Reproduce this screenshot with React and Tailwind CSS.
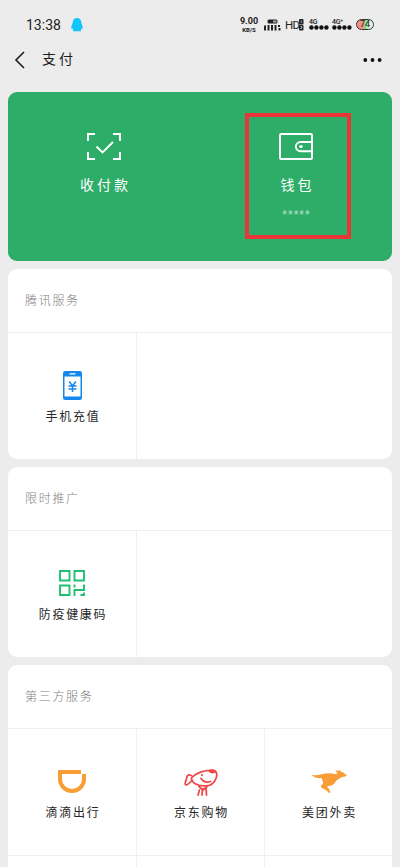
import React from "react";

function StatusBar() {
  return (
    <div className="flex h-[46px] shrink-0 items-start pl-[26px] pt-[15px]">
      <span className="w-[45px] font-['Roboto'] text-[14px] leading-[20px] text-[#222]">13:38</span>
      <svg className="mt-[3px] h-[14px] w-[12px]" viewBox="0 0 12 14" fill="#0fc5fb">
        <path d="M6 0C3.300 0 1.800 2 1.700 4.500 1.500 6.300 0 8 .2 10.200c.1.9.8.4 1.300 0C1.500 11 1.900 11.700 2.400 12.200 1.700 12.600 1.700 13.300 2.600 13.300H9.400c.9 0 .9-.7.200-1.100.5-.5.9-1.200.9-2 .5.400 1.200.9 1.300 0C12 8 10.500 6.300 10.300 4.500 10.200 2 8.700 0 6 0Z" />
      </svg>
      <div className="ml-[156px] mt-[2px] flex w-[20px] flex-col items-center font-['Roboto'] font-bold text-[#222]">
        <span className="whitespace-nowrap text-[9px] leading-[9px]">9.00</span>
        <span className="whitespace-nowrap text-[6px] leading-[7px]">KB/S</span>
      </div>
      <svg className="ml-[5px] mt-[4px] h-[12px] w-[17px]" viewBox="0 0 17 12">
        <rect x="3.500" y=".5" width="10" height="4" rx="1.500" fill="#222" />
        <path d="M9 1.500h3.500v2H9z" fill="#aaa" />
        <path d="M0 6.500h2v5H0zM3.500 6h2v5.500h-2zM7 6h2v5.500H7zM10.500 6h2v5.500h-2zM14 6h2v2h-2zM14.500 9h2v2.500h-2z" fill="#222" />
      </svg>
      <span className="ml-[4px] w-[14px] whitespace-nowrap font-['Roboto'] text-[11.500px] leading-[20px] tracking-[-0.8px] text-[#222]">HD</span>
      <svg className="mt-[4px] h-[12px] w-[5px]" viewBox="0 0 5 12">
        <rect width="4.500" height="5.500" rx="1" fill="#222" />
        <rect y="6" width="4.500" height="5.500" rx="1" fill="#222" />
        <path d="M2.300 1.500v2.500M1.500 7.500h1.500v1l-1.500 1h1.500" stroke="#ddd" strokeWidth=".7" fill="none" />
      </svg>
      <Signal label="4G" className="ml-[5px]" />
      <Signal label="4G⁺" className="ml-[3px]" />
      <div className="ml-[4px] mt-[4px] flex h-[11px] w-[18px] items-center justify-center rounded-full border border-[#333] bg-linear-to-r from-[#f38f84] from-45% via-[#74d77c] via-45% to-[#eee] to-85% font-['Roboto'] text-[9px] leading-[9px] text-[#222]">
        74
      </div>
    </div>
  );
}

function Signal({ label, className }) {
  return (
    <div className={"mt-[4px] w-[20px] " + className}>
      <div className="h-[6px] whitespace-nowrap font-['Roboto'] text-[7px] font-medium leading-[6px] tracking-[-0.3px] text-[#222]">{label}</div>
      <svg className="block h-[5px] w-[20px]" viewBox="0 0 20 5" fill="#111">
        <circle cx="2.400" cy="2.500" r="2.200" />
        <circle cx="7.400" cy="2.500" r="2.200" />
        <circle cx="12.400" cy="2.500" r="2.200" />
        <circle cx="17.400" cy="2.500" r="2.200" />
      </svg>
    </div>
  );
}

function TitleBar() {
  return (
    <div className="flex h-[46px] shrink-0 items-start pl-[14px] pr-[18px] pt-[4px]">
      <svg className="mt-[1px] h-[18px] w-[11px]" viewBox="0 0 11 18" fill="none" stroke="#1c1c1c" strokeWidth="1.600">
        <path d="M10 1 2 9l8 8" />
      </svg>
      <span className="-mt-[1px] ml-[17px] text-[14px] leading-[19px] tracking-[3px] text-[#1c1c1c]">支付</span>
      <svg className="ml-auto mt-[8px] h-[4px] w-[19px]" viewBox="0 0 19 4" fill="#111">
        <circle cx="2.300" cy="2" r="1.900" />
        <circle cx="9.500" cy="2" r="1.900" />
        <circle cx="16.600" cy="2" r="1.900" />
      </svg>
    </div>
  );
}

function WalletPanel() {
  return (
    <div className="grid h-[169px] grid-cols-2 rounded-[9px] bg-[#2dad68] text-white">
      <div className="flex flex-col items-center pt-[41px]">
        <svg className="h-[28px] w-[34px]" viewBox="0 0 34 28" fill="none" stroke="white" strokeWidth="1.900">
          <path d="M1 8V1h7M26 1h7v7M33 19v7h-7M8 26H1v-7M9.500 13.500l6 6L26 9" />
        </svg>
        <span className="mt-[13px] pl-[3px] text-[14px] leading-[20px] tracking-[3px]">收付款</span>
      </div>
      <div className="relative flex flex-col items-center pt-[41px]">
        <svg className="h-[28px] w-[34px]" viewBox="0 0 34 28" fill="none" stroke="white" strokeWidth="1.900">
          <rect x="1" y="1" width="32" height="25" rx="1" />
          <path d="M33 9H21.500a4.600 4.600 0 0 0 0 9.200H33" />
          <circle cx="22" cy="13.600" r="1.700" fill="white" stroke="none" />
        </svg>
        <span className="mt-[13px] pl-[3px] text-[14px] leading-[20px] tracking-[3px]">钱包</span>
        <span className="mt-[14px] font-['Liberation_Sans'] text-[12px] italic leading-[14px] tracking-[1px] text-white/65">*****</span>
        <div className="absolute left-[45px] top-[21px] h-[126px] w-[106px] border-4 border-[#e93538]" />
      </div>
    </div>
  );
}

function Section({ title, children, className }) {
  return (
    <section className={"overflow-hidden rounded-[9px] bg-white " + className}>
      <h2 className="h-[64px] border-b border-[#f0f0f0] pl-[17px] pt-[22px] text-[12px] font-light leading-[18px] tracking-[1.700px] text-[#808080]">{title}</h2>
      <div className="grid grid-cols-[129px_128px_127px]">{children}</div>
    </section>
  );
}

function Service({ label, icon }) {
  return (
    <div className="flex h-[126px] flex-col items-center border-r border-[#f0f0f0] pt-[34px] nth-3:border-r-0">
      <div className="flex h-[36px] items-center justify-center">{icon}</div>
      <span className="mt-[4px] whitespace-nowrap pl-[2px] text-[12px] leading-[18px] tracking-[1.700px] text-[#262626]">{label}</span>
    </div>
  );
}

const phoneIcon = (
  <svg className="h-[29px] w-[19px]" viewBox="0 0 19 29">
    <rect width="19" height="29" rx="2.200" fill="#1687ed" />
    <path d="M1.500 5.500h16v20h-16z" fill="white" />
    <path d="M7 2.800h5" stroke="white" strokeWidth="1.300" strokeLinecap="round" />
    <path d="m6.200 10.500 3.300 4.500 3.300-4.500M9.500 15v6M5.500 15h8M5.500 18h8" fill="none" stroke="#1687ed" strokeWidth="1.500" />
  </svg>
);

const codeIcon = (
  <svg className="h-[26px] w-[26px]" viewBox="0 0 26 26" fill="none" stroke="#20bf71" strokeWidth="1.900">
    <path d="M1 1h9.500v9.500H1zM15.500 1H25v9.500h-9.500zM1 15.500h9.500V25H1zM15.500 14.500v3M15.500 26v-6H25v-5.500M21.500 25H26M25 22.500V26" />
  </svg>
);

const didiIcon = (
  <svg className="h-[23px] w-[28px]" viewBox="0 0 28 23" fill="none" stroke="#f99d37" strokeWidth="4">
    <path d="M23 2H2v7a12 12 0 0 0 24 0V4" />
  </svg>
);

const jdIcon = (
  <svg className="mt-[3px] h-[28px] w-[34px]" viewBox="0 0 34 28" fill="none" stroke="#ee4948" strokeWidth="1.800" strokeLinecap="round" strokeLinejoin="round">
    <path d="M7.500 9C12 3.500 22 .7 29 1.500c4 .5 4.500 4 3 8-2 5.500-7 8-13 7.300C13.500 16.500 9 14 7.500 10.500Z" />
    <path d="M7.200 6.500C4 5 3 6.500 2.500 9.500c-.5 2.500-2.300 5.500-1 6.200C3.500 16.700 6 13.500 8 11.500" />
    <path d="M17 9.500c2 3 5.500 4.300 9.500 3M15 17.500l4 3.500 4-3.300M15.500 21 14 26M18.500 20l-.5 6M22 18.500l.5 7.500" />
    <path d="M25.500 2.200c1.500 1.700 4 2 5.500.3-1.500-1.300-4-1.500-5.500-.3Z" fill="#ee4948" />
    <circle cx="18" cy="6" r="1.100" fill="#ee4948" stroke="none" />
  </svg>
);

const meituanIcon = (
  <svg className="h-[25px] w-[36px]" viewBox="0 0 36 25" fill="#f99d37">
    <path d="M.4 5.200C3 6.800 6.500 6.300 9.500 5.500c5-1.200 10-1.700 14.500-.4 1.200.2 2-.4 2.600-1L24.500 2.300 25 1.300l2.700 1L27.500.3l2.700 2.400c2.300.5 4 2 5.600 3.600-.8 1.200-2.200 1.500-4.300 1.600-2.300.4-3.500 2.300-5.500 3.100-1.500 1.600-2.500 3.800-4.700 5-1.300.6-2.800.8-4.300 1l-.7 1.200c1.500 1.300 2.700 3 3 4.700l-1 1.700c-1-2-3-3.500-5-4.300l-3.200-2c-.8-1.700 1.200-2.500 2-3.700.2-2-1.200-3.300-1.500-5.500C7 9.500 3 8.800.4 5.200Z" />
  </svg>
);

export default function App() {
  return (
    <main className="flex h-[867px] w-[400px] flex-col overflow-hidden bg-[#ececec] font-['Noto_Sans_CJK_SC',sans-serif]">
      <StatusBar />
      <TitleBar />
      <div className="flex shrink-0 flex-col gap-2 px-2">
        <WalletPanel />
        <Section title="腾讯服务" className="h-[190px]">
          <Service label="手机充值" icon={phoneIcon} />
        </Section>
        <Section title="限时推广" className="h-[190px]">
          <Service label="防疫健康码" icon={codeIcon} />
        </Section>
        <Section title="第三方服务" className="h-[210px]">
          <Service label="滴滴出行" icon={didiIcon} />
          <Service label="京东购物" icon={jdIcon} />
          <Service label="美团外卖" icon={meituanIcon} />
          <div className="h-[20px] border-r border-t border-[#f0f0f0]" />
          <div className="h-[20px] border-r border-t border-[#f0f0f0]" />
          <div className="h-[20px] border-t border-[#f0f0f0]" />
        </Section>
      </div>
    </main>
  );
}
